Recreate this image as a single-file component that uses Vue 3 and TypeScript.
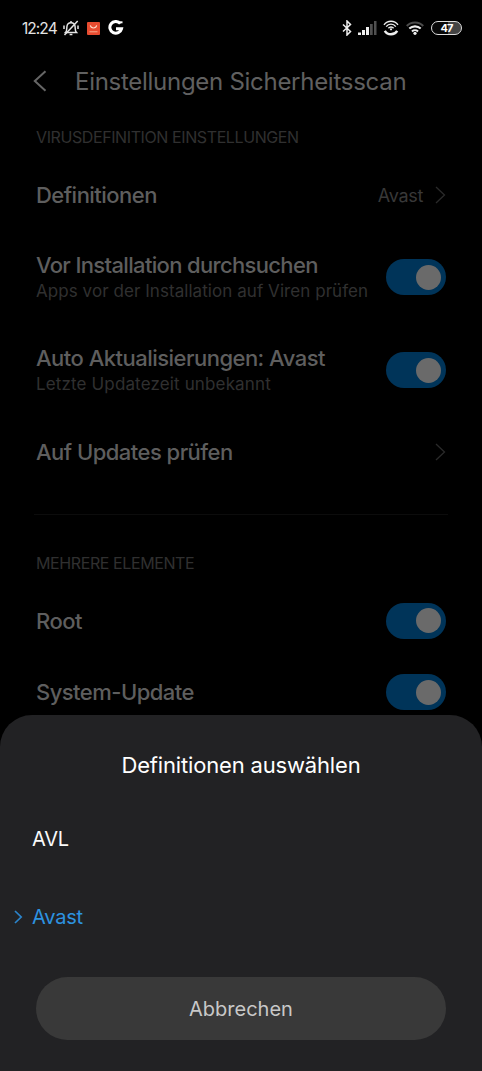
<script setup lang="ts">
interface Row {
  id: string
  title: string
  sub?: string
  value?: string
  toggle?: boolean
}

const definitionRows: Row[] = [
  { id: 'definitions', title: 'Definitionen', value: 'Avast' },
  { id: 'install', title: 'Vor Installation durchsuchen', sub: 'Apps vor der Installation auf Viren prüfen', toggle: true },
  { id: 'auto', title: 'Auto Aktualisierungen: Avast', sub: 'Letzte Updatezeit unbekannt', toggle: true },
  { id: 'updates', title: 'Auf Updates prüfen' },
]

const elementRows: Row[] = [
  { id: 'root', title: 'Root', toggle: true },
  { id: 'system', title: 'System-Update', toggle: true },
]
</script>

<template>
  <div class="phone">
    <div class="status">
      <div class="status-left">
        <span class="clock">12:24</span>
        <svg class="bell" width="16" height="16" viewBox="0 0 16 16" fill="none" stroke="#e4e4e4" stroke-width="1.5">
          <path d="M2.600 12.400C4 11 3.700 9 3.900 6.800C4.100 4.300 5.600 2.800 8 2.800S11.900 4.300 12.100 6.800C12.300 9 12 11 13.400 12.400Z" />
          <path d="M6.600 14.400h2.800M8 1v1.800M14.700 1L1.500 15" />
          <path d="M1 5.500v3.500M15 5.500v3.500" />
        </svg>
        <svg class="store" width="13" height="13" viewBox="0 0 13 13">
          <rect width="13" height="13" rx="1" fill="#e84c30" />
          <path d="M3.300 3.400C4 6.800 9 6.800 9.700 3.400" fill="none" stroke="#ffd9c8" stroke-width="1.100" />
          <path d="M2.500 9.700h8" stroke="#f29478" stroke-width="1.300" />
        </svg>
        <svg class="gmark" width="16" height="16" viewBox="0 0 16 16" fill="none" stroke="#fff" stroke-width="3">
          <path d="M12.300 3.600A5.900 5.900 0 1 0 13.500 8.800H8" />
          <path d="M11.500 2.300h3" stroke-width="2" />
        </svg>
      </div>
      <div class="status-right">
        <svg width="10" height="16" viewBox="0 0 10 16" fill="none" stroke="#eee" stroke-width="1.500">
          <path d="M1 4.500L8.500 11.500L5 15V1L8.500 4.500L1 11.500" />
        </svg>
        <svg class="signal" width="19" height="14" viewBox="0 0 19 14">
          <path d="M0 11.500h3v2.500H0zM4 9h3v5H4zM8 6h3v8H8z" fill="#eee" />
          <path d="M12 3h2.700v11h-2.700zM16 0h2.500v14h-2.500z" fill="#505050" />
        </svg>
        <svg class="hotspot" width="16" height="16" viewBox="0 0 16 16" fill="none" stroke="#eee" stroke-width="1.400">
          <path d="M1 4.800C4.500 .1 11.500 .1 15 4.800M3.200 6.600C5.700 3.300 10.300 3.300 12.800 6.600M5.400 8.300C6.800 6.600 9.200 6.600 10.600 8.300" />
          <circle cx="8" cy="9.300" r="1.100" fill="#eee" stroke="none" />
          <path d="M1.800 10.800C4.500 15.400 11.500 15.400 14.200 10.800" stroke-width="2.400" />
        </svg>
        <svg class="wifi" width="18" height="14" viewBox="0 0 18 14" fill="none" stroke-width="2.100">
          <path d="M.8 5C5 .3 13 .3 17.200 5" stroke="#4c4c4c" />
          <path d="M3.300 7.600C6.500 4.600 11.500 4.600 14.700 7.600M6 10.400C7.700 8.800 10.300 8.800 12 10.400" stroke="#eee" />
          <circle cx="9" cy="12.300" r="1.600" fill="#eee" />
        </svg>
        <div class="battery"><span>47</span></div>
      </div>
    </div>

    <header class="header">
      <svg class="back" width="14" height="22" viewBox="0 0 14 22" fill="none" stroke="#666" stroke-width="2">
        <path d="M12.500 1.200L1.800 11L12.500 20.800" />
      </svg>
      <h1>Einstellungen Sicherheitsscan</h1>
    </header>

    <h2 class="label label-first">VIRUSDEFINITION EINSTELLUNGEN</h2>
    <div v-for="row in definitionRows" :key="row.id" class="row" :class="row.id">
      <div class="copy">
        <div class="title">{{ row.title }}</div>
        <div v-if="row.sub" class="sub">{{ row.sub }}</div>
      </div>
      <div v-if="row.toggle" class="toggle"><i></i></div>
      <div v-else class="more">
        <span v-if="row.value">{{ row.value }}</span>
        <svg width="11" height="18" viewBox="0 0 11 18" fill="none" stroke="#2a2a2a" stroke-width="1.300">
          <path d="M1 1L9.500 9L1 17" />
        </svg>
      </div>
    </div>

    <div class="divider"></div>
    <h2 class="label label-second">MEHRERE ELEMENTE</h2>
    <div v-for="row in elementRows" :key="row.id" class="row" :class="row.id">
      <div class="title">{{ row.title }}</div>
      <div class="toggle"><i></i></div>
    </div>

    <section class="sheet">
      <h3>Definitionen auswählen</h3>
      <div class="option avl"><span>AVL</span></div>
      <div class="option selected">
        <svg width="9" height="14" viewBox="0 0 9 14" fill="none" stroke="#2b84cb" stroke-width="1.700">
          <path d="M1 1L7.200 7L1 13" />
        </svg>
        <span>Avast</span>
      </div>
      <button class="cancel">Abbrechen</button>
    </section>
  </div>
</template>

<style>
body {
  margin: 0;
  background: #000;
}
</style>

<style scoped>
.phone {
  position: relative;
  width: 482px;
  height: 1071px;
  overflow: hidden;
  background: #000;
  color: #5e5e5e;
  font-family: Inter, "Open Sans", sans-serif;
}
h1, h2, h3 {
  margin: 0;
  font-weight: 400;
}
svg {
  display: block;
  flex: none;
}
.status {
  display: flex;
  justify-content: space-between;
  box-sizing: border-box;
  height: 56px;
  padding: 0 20px 0 22px;
}
.status-left, .status-right {
  display: flex;
  align-items: center;
  height: 56px;
}
.clock {
  width: 41px;
  color: #e4e4e4;
  font-size: 15.5px;
  letter-spacing: -0.95px;
}
.store { margin-left: 8px; }
.gmark { margin-left: 8px; }
.signal { margin-left: 6px; }
.hotspot { margin-left: 6px; }
.wifi { margin-left: 7px; }
.battery {
  display: flex;
  align-items: center;
  justify-content: center;
  box-sizing: border-box;
  width: 31px;
  height: 14px;
  margin-left: 7px;
  border: 1.5px solid #ddd;
  border-radius: 7px;
  background: linear-gradient(90deg, #080808 0 55%, #444 55%);
  color: #fff;
  font-size: 11px;
  font-weight: 700;
  letter-spacing: -0.8px;
  line-height: 11px;
}
.header {
  display: flex;
  align-items: center;
  height: 50px;
  padding: 0 0 5px 33px;
}
.header h1 {
  margin-left: 28px;
  color: #606060;
  font-size: 24px;
  letter-spacing: -0.28px;
  white-space: nowrap;
}
.label {
  display: flex;
  align-items: center;
  padding-left: 36px;
  color: #303030;
  font-size: 16px;
  letter-spacing: -0.4px;
  white-space: nowrap;
}
.label-first { height: 52px; }
.label-second { height: 44px; }
.row {
  display: flex;
  align-items: center;
  justify-content: space-between;
  padding: 0 36px;
}
.definitions { height: 64px; }
.install { height: 100px; }
.auto { height: 86px; }
.updates { height: 78px; }
.root { height: 71px; }
.system { height: 72px; }
.title {
  font-size: 22px;
  font-weight: 450;
  letter-spacing: -0.53px;
  line-height: 28px;
  white-space: nowrap;
}
.install .title { letter-spacing: -0.66px; }
.auto .title { letter-spacing: -0.52px; }
.sub {
  color: #303030;
  font-size: 17px;
  letter-spacing: 0.06px;
  line-height: 25px;
  white-space: nowrap;
}
.auto .sub { letter-spacing: 0.14px; }
.more {
  display: flex;
  align-items: center;
  gap: 12px;
  color: #383838;
  font-size: 18px;
  letter-spacing: -0.3px;
}
.toggle {
  display: flex;
  align-items: center;
  justify-content: flex-end;
  flex: none;
  box-sizing: border-box;
  width: 60px;
  height: 36px;
  padding-right: 5px;
  border-radius: 18px;
  background: #003459;
}
.toggle i {
  width: 25px;
  height: 25px;
  border-radius: 50%;
  background: #6a6a6a;
}
.divider {
  height: 1px;
  margin: 23px 34px 26px;
  background: #0c0c0c;
}
.sheet {
  position: absolute;
  right: 0;
  bottom: 0;
  left: 0;
  height: 356px;
  border-radius: 32px 32px 0 0;
  background: #222224;
}
.sheet h3 {
  height: 100px;
  color: #fff;
  font-size: 22px;
  letter-spacing: -0.17px;
  line-height: 101px;
  text-align: center;
}
.option {
  display: flex;
  align-items: center;
  padding-left: 32px;
  color: #fafafa;
  font-size: 20px;
  letter-spacing: -0.2px;
}
.avl { height: 48px; }
.selected {
  gap: 9px;
  height: 108px;
  padding-left: 14px;
  color: #2d93e0;
}
.cancel {
  display: block;
  width: 410px;
  height: 63px;
  margin: 6px auto 0;
  padding: 2px 0 0;
  border: 0;
  border-radius: 32px;
  background: #393939;
  color: #c8c8c8;
  font: 20px/61px Inter, sans-serif;
}
</style>
